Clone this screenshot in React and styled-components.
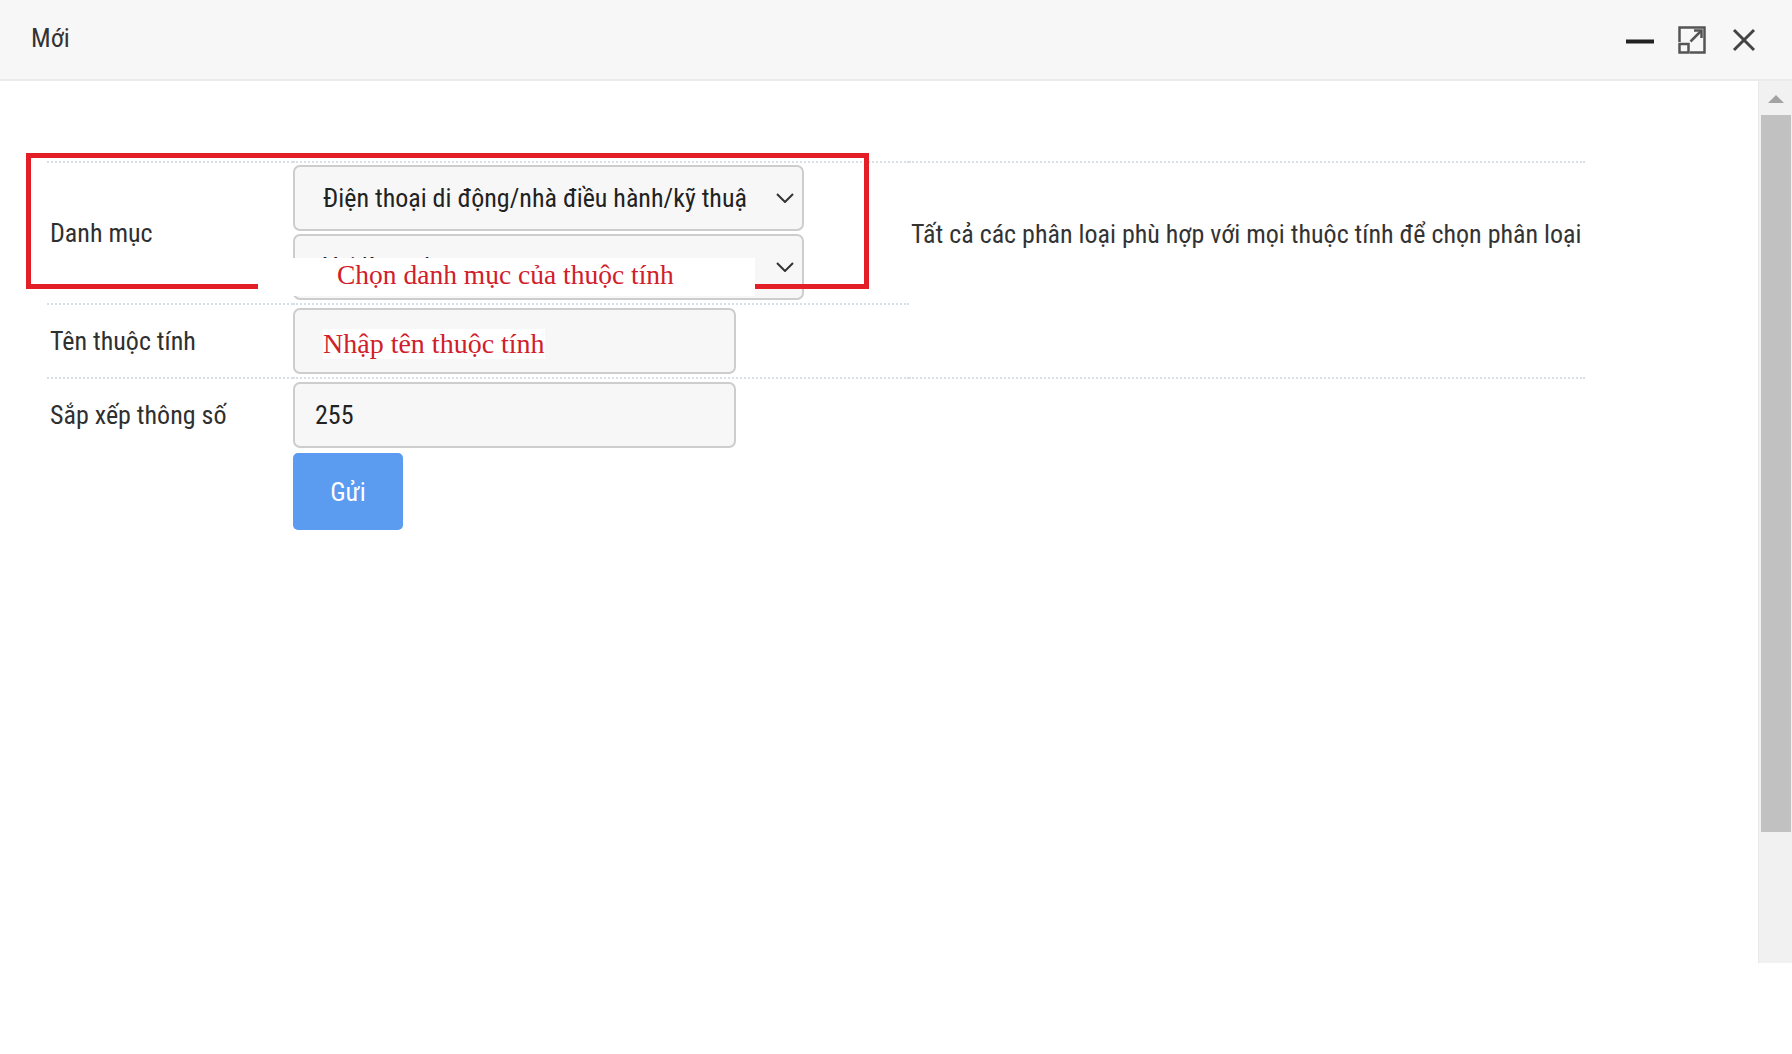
import React from "react";
import styled, { createGlobalStyle } from "styled-components";

const NARROW = `"Roboto Condensed", "Liberation Sans Narrow", "Arial Narrow", "DejaVu Sans Condensed", Roboto, sans-serif`;
const SERIF = `"Liberation Serif", "Times New Roman", serif`;

const GlobalStyle = createGlobalStyle`
    html, body {
        margin: 0;
        padding: 0;
        background: #fff;
    }
    body {
        font-family: ${NARROW};
        color: #333;
    }
`;

const Page = styled.div`
    width: 1792px;
    height: 1054px;
    overflow: hidden;
    background: #fff;
`;

const Header = styled.div`
    height: 79px;
    background: #f7f7f7;
    border-bottom: 2px solid #ebebeb;
    display: flex;
    align-items: center;
    justify-content: space-between;
    padding: 0 36px 0 31px;
`;

const Title = styled.div`
    font-size: 26px;
    color: #333;
    margin-top: -3px;
`;

const Controls = styled.div`
    display: flex;
    align-items: center;
    gap: 24px;
    & > svg:last-child {
        margin-left: 2px;
    }
`;

const Body = styled.div`
    display: flex;
    height: 882px;
`;

const Content = styled.div`
    flex: 1;
    position: relative;
    padding: 80px 0 0 47px;
`;

const Form = styled.div`
    width: 1538px;
    display: grid;
    grid-template-columns: 246px 616px 1fr;
`;

const Cell = styled.div`
    border-top: ${({bordered = true}) => bordered ? "2px dotted #d7dfe7" : "none"};
    padding: ${({pad}) => pad || "3px 0"};
    ${({span}) => span ? `grid-row: span ${span};` : ""}
`;

const LabelCell = styled(Cell)`
    display: flex;
    align-items: center;
    padding-left: 3px;
    font-size: 26px;
    color: #2f2f2f;
`;

const HelpCell = styled(Cell)`
    padding: 55px 0 0 2px;
    font-size: 26px;
    line-height: 32px;
    color: #333;
    white-space: nowrap;
`;

const Select = styled.div`
    box-sizing: border-box;
    width: 511px;
    height: 66px;
    margin-top: ${({first}) => first ? "0" : "3px"};
    border: 2px solid #cdcdcd;
    border-radius: 7px;
    background: #f7f7f7;
    display: flex;
    align-items: center;
    justify-content: space-between;
    padding: 0 8px 0 28px;
    font-size: 26px;
    color: #222;
    white-space: nowrap;
    overflow: hidden;
`;

const Input = styled.div`
    box-sizing: border-box;
    width: 443px;
    height: 66px;
    border: 2px solid #cdcdcd;
    border-radius: 7px;
    background: #f7f7f7;
    display: flex;
    align-items: center;
    padding-left: 20px;
    font-size: 26px;
    color: #222;
`;

const Note = styled.span`
    font-family: ${SERIF};
    font-size: 28px;
    line-height: 30px;
    color: #d0202a;
    background: #fff;
    margin: 6px 0 0 8px;
`;

const Button = styled.button`
    width: 110px;
    height: 77px;
    border: none;
    border-radius: 5px;
    background: #5b9bf0;
    color: #fff;
    font-family: ${NARROW};
    font-size: 26px;
    padding: 0;
`;

const Highlight = styled.div`
    position: absolute;
    left: 26px;
    top: 72px;
    width: 843px;
    height: 136px;
    box-sizing: border-box;
    border: 5px solid #e31e26;
    pointer-events: none;
`;

const Caption = styled.div`
    position: absolute;
    left: 258px;
    top: 177px;
    width: 497px;
    height: 38px;
    box-sizing: border-box;
    padding: 1px 0 0 79px;
    background: #fff;
    font-family: ${SERIF};
    font-size: 27.5px;
    line-height: 32px;
    color: #d0202a;
    white-space: nowrap;
`;

const Scrollbar = styled.div`
    width: 34px;
    background: #f1f1f1;
    border-left: 1px solid #e9e9e9;
    box-sizing: border-box;
    display: flex;
    flex-direction: column;
    align-items: center;
`;

const ArrowUp = styled.div`
    margin: 14px 0 12px;
    width: 0;
    height: 0;
    border-left: 8px solid transparent;
    border-right: 8px solid transparent;
    border-bottom: 8px solid #a3a3a3;
`;

const Thumb = styled.div`
    width: 30px;
    height: 717px;
    background: #c1c1c1;
`;

const Chevron = () => (
    <svg width="18" height="10" viewBox="0 0 18 10">
        <polyline points="1,1 9,9 17,1" fill="none" stroke="#333" strokeWidth="2"/>
    </svg>
);

const MinimizeIcon = () => (
    <svg width="28" height="28" viewBox="0 0 28 28">
        <rect x="0" y="13.5" width="28" height="4" fill="#222"/>
    </svg>
);

const MaximizeIcon = () => (
    <svg width="28" height="28" viewBox="0 0 28 28" fill="none" stroke="#555" strokeWidth="2.5">
        <path d="M1.5 16 V1.5 H26.5 V26.5 H12"/>
        <rect x="1.5" y="18" width="9" height="8.5"/>
        <path d="M12.5 15.5 L23 5"/>
        <path d="M16 4.5 H23.5 V12"/>
    </svg>
);

const CloseIcon = () => (
    <svg width="24" height="24" viewBox="0 0 24 24" stroke="#444" strokeWidth="3">
        <path d="M2 2 L22 22 M22 2 L2 22"/>
    </svg>
);

const App = () => {
    return <Page>
        <GlobalStyle/>
        <Header>
            <Title>Mới</Title>
            <Controls>
                <MinimizeIcon/>
                <MaximizeIcon/>
                <CloseIcon/>
            </Controls>
        </Header>
        <Body>
            <Content>
                <Form>
                    <LabelCell>Danh mục</LabelCell>
                    <Cell pad="2px 0 3px">
                        <Select first>Điện thoại di động/nhà điều hành/kỹ thuậ<Chevron/></Select>
                        <Select>Vui lòng chọn<Chevron/></Select>
                    </Cell>
                    <HelpCell span={2}>Tất cả các phân loại phù hợp với mọi thuộc tính để chọn phân loại</HelpCell>

                    <LabelCell>Tên thuộc tính</LabelCell>
                    <Cell>
                        <Input><Note>Nhập tên thuộc tính</Note></Input>
                    </Cell>

                    <LabelCell>Sắp xếp thông số</LabelCell>
                    <Cell>
                        <Input>255</Input>
                    </Cell>
                    <Cell/>

                    <Cell bordered={false}/>
                    <Cell bordered={false} pad="2px 0 0">
                        <Button>Gửi</Button>
                    </Cell>
                    <Cell bordered={false}/>
                </Form>
                <Highlight/>
                <Caption>Chọn danh mục của thuộc tính</Caption>
            </Content>
            <Scrollbar>
                <ArrowUp/>
                <Thumb/>
            </Scrollbar>
        </Body>
    </Page>;
};

export default App;
